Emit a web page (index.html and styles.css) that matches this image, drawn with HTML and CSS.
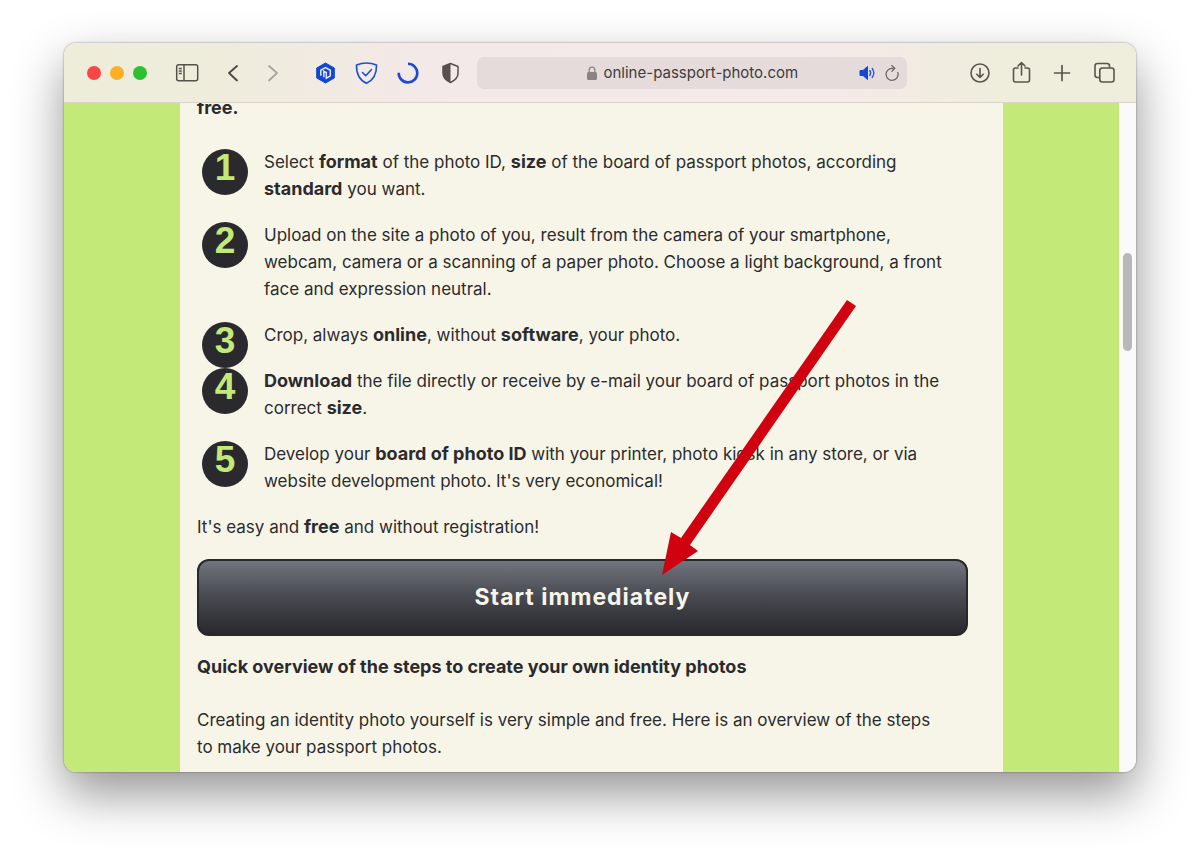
FILE: index.html
```html
<!DOCTYPE html>
<html lang="en">
<head>
<meta charset="utf-8">
<title>online-passport-photo.com</title>
<link rel="stylesheet" href="styles.css">
</head>
<body>
<div class="window">
  <header class="toolbar">
    <div class="lights">
      <button class="light light-close" aria-label="Close"></button>
      <button class="light light-min" aria-label="Minimise"></button>
      <button class="light light-zoom" aria-label="Zoom"></button>
    </div>
    <button class="tool tool-sidebar" aria-label="Sidebar">
      <svg viewBox="0 0 24 24" fill="none" stroke="#57514c" stroke-width="1.5"><rect x="1.7" y="3.7" width="21" height="16" rx="2"/><path d="M9 4v16M3.8 7.500h3M3.8 10h3M3.8 12.500h3"/></svg>
    </button>
    <div class="history">
      <button class="tool" aria-label="Back"><svg viewBox="0 0 24 24" fill="none" stroke="#4b4643" stroke-width="1.8" stroke-linecap="round" stroke-linejoin="round"><path d="M16 5l-8 7 8 7.500"/></svg></button>
      <button class="tool" aria-label="Forward"><svg viewBox="0 0 24 24" fill="none" stroke="#aba3a1" stroke-width="1.8" stroke-linecap="round" stroke-linejoin="round"><path d="M8 5l8 7-8 7.500"/></svg></button>
    </div>
    <div class="extensions">
      <button class="tool" aria-label="Hexagon extension"><svg viewBox="0 0 24 24"><path d="M11.500 2l8.800 5v10l-8.800 5-8.800-5V7z" fill="#1347d2" stroke="#1347d2" stroke-linejoin="round"/><path d="M6.800 14.800V9.300l4.700-2.700 4.800 2.700v5.500L12.300 17.100v-5.600L9.800 10.300v6" fill="none" stroke="#e4e5f5" stroke-width="1.500"/></svg></button>
      <button class="tool" aria-label="Ad blocker"><svg viewBox="0 0 24 24" fill="none" stroke="#1c4fd6" stroke-width="1.600" stroke-linecap="round" stroke-linejoin="round"><path d="M11.500 2c3.300 0 7 .8 10 2 .3 9-3 15-10 18.300C4.500 19 1.200 13 1.500 4c3-1.200 6.700-2 10-2z"/><path d="M7.500 11.500l3.200 3.200 5.600-6"/></svg></button>
      <button class="tool" aria-label="Progress extension"><svg viewBox="0 0 24 24" fill="none" stroke="#1c4bd2" stroke-width="2.600"><path d="M12 2.800a9.300 9.300 0 1 1-9.300 9"/></svg></button>
      <button class="tool" aria-label="Privacy report"><svg viewBox="0 0 24 24"><path d="M13.500 2.500l7.500 3v7c0 4-3 6.800-7.500 9-4.500-2.200-7.500-5-7.500-9v-7z" fill="none" stroke="#57504e" stroke-width="1.500" stroke-linejoin="round"/><path d="M13.500 2.500l-7.500 3v7c0 4 3 6.800 7.500 9z" fill="#57504e"/></svg></button>
    </div>
    <div class="address">
      <div class="site">
        <svg class="lock" viewBox="0 0 10 14"><rect y="6" width="10" height="8" rx="1.500" fill="#8b8382"/><path d="M2.200 7V4a2.800 2.800 0 0 1 5.600 0v3" fill="none" stroke="#8b8382" stroke-width="1.300"/></svg>
        <input class="url" type="text" aria-label="Address" value="online-passport-photo.com">
      </div>
      <div class="address-actions">
        <button class="mini" aria-label="Mute tab"><svg viewBox="0 0 18 16"><path d="M1 5.500h3L8.500 1.500v13L4 10.500H1z" fill="#1548d8" stroke="#1548d8" stroke-linejoin="round"/><path d="M10.800 5.500q1.800 2.500 0 5M13.200 3.500q3.300 4.500 0 9" fill="none" stroke="#1f51d8" stroke-width="1.300" stroke-linecap="round"/></svg></button>
        <button class="mini" aria-label="Reload"><svg viewBox="0 0 18 16" fill="none" stroke="#716a69" stroke-width="1.300" stroke-linecap="round" stroke-linejoin="round"><path d="M14.800 7.500A6 6 0 1 1 9 3.300h2.800M8.700.500l3.100 2.800-2.800 2.900"/></svg></button>
      </div>
    </div>
    <div class="actions">
      <button class="tool" aria-label="Downloads"><svg viewBox="0 0 24 24" fill="none" stroke="#5b554e" stroke-width="1.600" stroke-linecap="round" stroke-linejoin="round"><circle cx="12" cy="12" r="9"/><path d="M12 7.500v9M8.800 13.300l3.200 3.200 3.200-3.200"/></svg></button>
      <button class="tool" aria-label="Share"><svg viewBox="0 0 24 24" fill="none" stroke="#5b554e" stroke-width="1.600" stroke-linecap="round" stroke-linejoin="round"><path d="M9 7H6.500A2 2 0 0 0 4.500 9v10a2 2 0 0 0 2 2h12a2 2 0 0 0 2-2V9a2 2 0 0 0-2-2H16M12.500 14V1.500M9 5l3.500-3.500L16 5"/></svg></button>
      <button class="tool" aria-label="New tab"><svg viewBox="0 0 24 24" fill="none" stroke="#5b554e" stroke-width="1.700" stroke-linecap="round"><path d="M12 4.500v15M4.500 12h15"/></svg></button>
      <button class="tool" aria-label="Tab overview"><svg viewBox="0 0 24 24" fill="none" stroke="#5b554e" stroke-width="1.600" stroke-linejoin="round"><rect x="8.800" y="7" width="14.200" height="14" rx="2.500"/><path d="M8.500 16.500H6.500a2.500 2.500 0 0 1-2.500-2.500V5a2.500 2.500 0 0 1 2.500-2.500h9.500a2.500 2.500 0 0 1 2.500 2.500v1.500"/></svg></button>
    </div>
  </header>
  <div class="viewport">
    <div class="page">
      <main class="content">
        <p class="intro"><strong>free.</strong></p>
        <ol class="steps">
          <li class="step"><span class="badge">1</span><p class="step-text">Select <strong>format</strong> of the photo ID, <strong>size</strong> of the board of passport photos, according <strong>standard</strong> you want.</p></li>
          <li class="step"><span class="badge">2</span><p class="step-text">Upload on the site a photo of you, result from the camera of your smartphone, webcam, camera or a scanning of a paper photo. Choose a light background, a front face and expression neutral.</p></li>
          <li class="step"><span class="badge">3</span><p class="step-text">Crop, always <strong>online</strong>, without <strong>software</strong>, your photo.</p></li>
          <li class="step"><span class="badge">4</span><p class="step-text"><strong>Download</strong> the file directly or receive by e-mail your board of passport photos in the correct <strong>size</strong>.</p></li>
          <li class="step"><span class="badge">5</span><p class="step-text">Develop your <strong>board of photo ID</strong> with your printer, photo kiosk in any store, or via website development photo. It's very economical!</p></li>
        </ol>
        <p class="note">It's easy and <strong>free</strong> and without registration!</p>
        <button class="start">Start immediately</button>
        <h2 class="overview-title">Quick overview of the steps to create your own identity photos</h2>
        <p class="overview">Creating an identity photo yourself is very simple and free. Here is an overview of the steps to make your passport photos.</p>
        <svg class="arrow" viewBox="0 0 200 280" aria-hidden="true"><path d="M187 2l9 6L30 247l8 6L2 277l9-43 10 6z" fill="#d0020f"/></svg>
      </main>
    </div>
    <div class="scrollbar"><div class="thumb"></div></div>
  </div>
</div>
</body>
</html>
```
FILE: styles.css
```css
* {
  box-sizing: border-box;
}

body {
  margin: 0;
  min-height: 100vh;
  display: flex;
  padding: 43px 64px 85px;
  background: #fff;
  color: #2b2b2d;
  font: 17px/27px Inter, "Liberation Sans", sans-serif;
}

p,
h2,
ol {
  margin: 0;
  padding: 0;
}

button {
  margin: 0;
  padding: 0;
  border: 0;
  background: none;
  font: inherit;
}

svg {
  display: block;
}

strong {
  font-size: 18px;
  line-height: 1;
}

.window {
  flex: 1;
  min-width: 0;
  display: flex;
  flex-direction: column;
  overflow: hidden;
  border-radius: 12px;
  box-shadow: 0 0 2px rgba(0, 0, 0, 0.5), 0 22px 50px rgba(0, 0, 0, 0.42);
}

.toolbar {
  display: flex;
  align-items: center;
  height: 60px;
  padding: 0 21px 0 23px;
  border-bottom: 1px solid #d9d3cc;
  background: linear-gradient(90deg, #eeedd9 0%, #efecdc 15%, #f3e9e8 33%, #f4eae8 72%, #efeddd 86%, #efeddb 100%);
}

.lights {
  display: flex;
  gap: 9px;
}

.light {
  width: 14px;
  height: 14px;
  border-radius: 50%;
}

.light-close {
  background: #fc4645;
}

.light-min {
  background: #fcb02a;
}

.light-zoom {
  background: #2bc131;
}

.tool,
.tool svg {
  width: 24px;
  height: 24px;
}

.tool-sidebar {
  margin: 0 22px 0 28px;
}

.history {
  display: flex;
  gap: 16px;
}

.extensions {
  display: flex;
  gap: 17px;
  margin: 0 16px 0 29px;
}

.address {
  flex: 1;
  display: grid;
  grid-template-columns: 1fr auto 1fr;
  align-items: center;
  height: 32px;
  padding: 0 6px;
  border-radius: 7px;
  background: #e5dbdb;
}

.site {
  grid-column: 2;
  display: flex;
  align-items: center;
  gap: 7px;
}

.lock {
  width: 10px;
  height: 14px;
}

.url {
  width: 194px;
  padding: 0;
  border: 0;
  background: none;
  color: #403b3c;
  font: 15px/20px Inter, "Liberation Sans", sans-serif;
}

.address-actions {
  display: flex;
  justify-content: flex-end;
  gap: 6px;
}

.mini,
.mini svg {
  width: 18px;
  height: 16px;
}

.actions {
  display: flex;
  gap: 17px;
  margin-left: 61px;
}

.viewport {
  flex: 1;
  display: flex;
  min-height: 0;
  overflow: hidden;
}

.page {
  flex: 1;
  display: flex;
  padding: 0 116px;
  background: #c3ea79;
}

/* The page is scrolled a little, so its first line is cut by the toolbar. */
.content {
  flex: 1;
  position: relative;
  margin-top: -8px;
  padding: 0 35px 0 17px;
  background: #f7f5e8;
}

.intro {
  margin-bottom: 27px;
}

.steps {
  padding-left: 5px;
  list-style: none;
}

.step {
  display: flex;
  gap: 16px;
}

.badge {
  flex: none;
  width: 46px;
  height: 46px;
  border-radius: 50%;
  background: #2a2a2e;
  color: #c3ea79;
  font: bold 37px/38px "Liberation Sans", Arial, sans-serif;
  text-align: center;
}

.step-text {
  padding-bottom: 19px;
}

.start {
  display: block;
  width: 100%;
  margin: 18px 0 17px;
  padding: 23px 0;
  border: 2px solid #28282c;
  border-radius: 12px;
  background: linear-gradient(#71757d, #4a4c53 45%, #28282d);
  color: #f7f5e8;
  font-size: 23px;
  font-weight: 700;
  letter-spacing: 1px;
}

.overview-title {
  margin-bottom: 27px;
  font-size: 18px;
  font-weight: 700;
}

.overview {
  padding-right: 20px;
}

.arrow {
  position: absolute;
  top: 203px;
  left: 480px;
  width: 200px;
  height: 280px;
  pointer-events: none;
}

.scrollbar {
  width: 17px;
  padding: 150px 4px 0;
  background: #fafafa;
}

.thumb {
  height: 98px;
  border-radius: 5px;
  background: #b8b8b8;
}
```
